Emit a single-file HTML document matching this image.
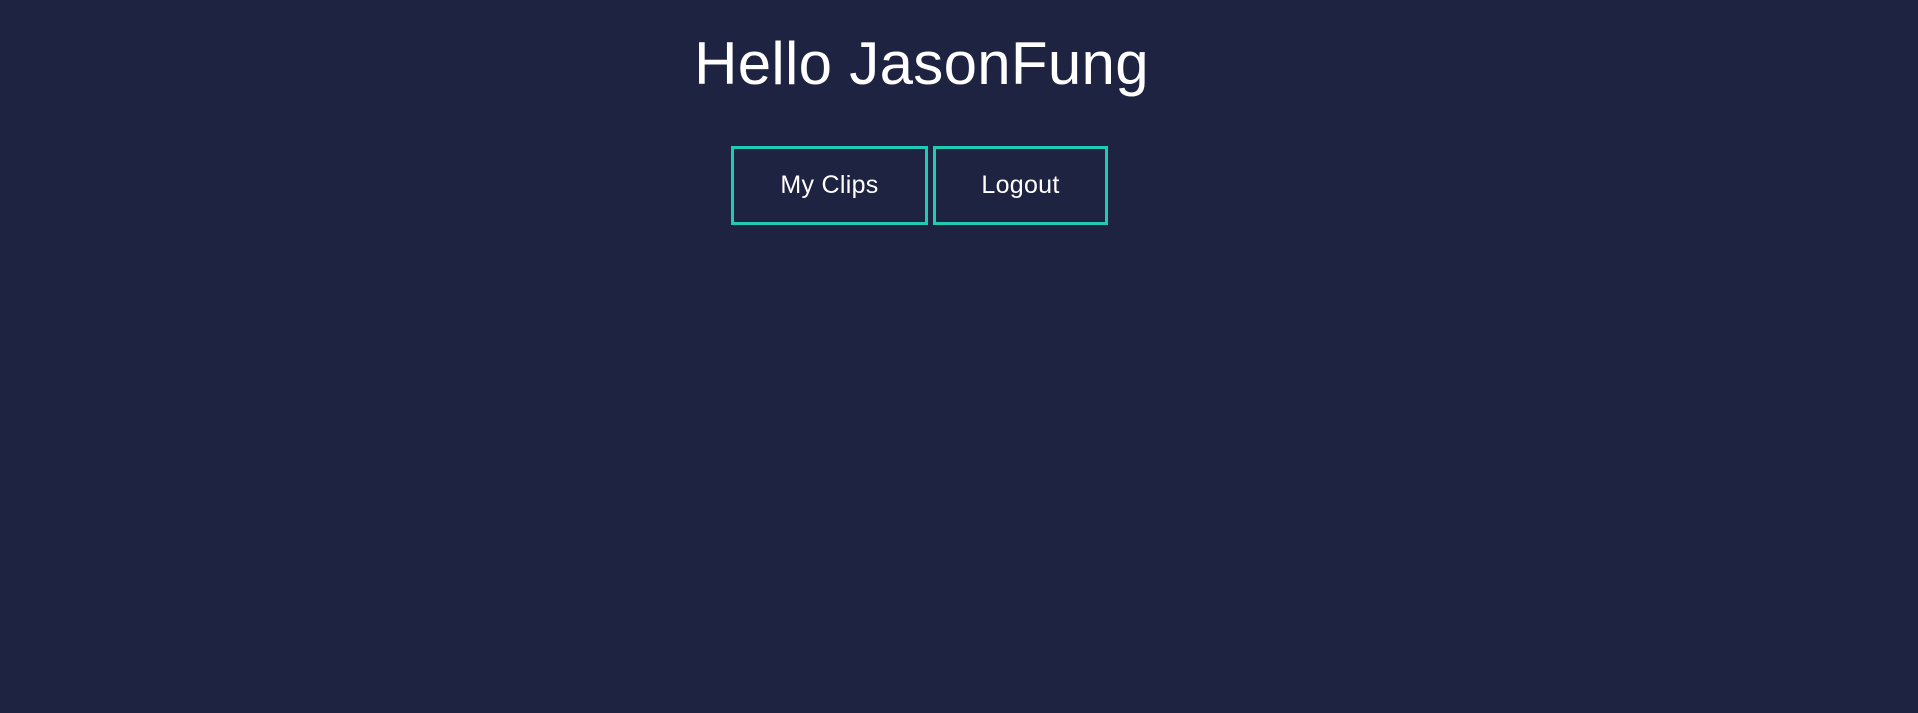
<!DOCTYPE html>
<html><head><style>
html,body{margin:0;padding:0;width:1918px;height:713px;background:#1f2342;overflow:hidden}
h1{position:absolute;left:0;width:1843px;top:29px;margin:0;text-align:center;font:400 60px "Liberation Sans",sans-serif;color:#fff;letter-spacing:0.3px}
.b{position:absolute;top:146px;height:73px;border:3px solid #1fcbb5;color:#fff;font:400 25px "Liberation Sans",sans-serif;letter-spacing:0.3px;display:flex;align-items:center;justify-content:center}
</style></head><body>
<h1>Hello JasonFung</h1>
<div class="b" style="left:731px;width:191px">My Clips</div>
<div class="b" style="left:933px;width:169px">Logout</div>
</body></html>
